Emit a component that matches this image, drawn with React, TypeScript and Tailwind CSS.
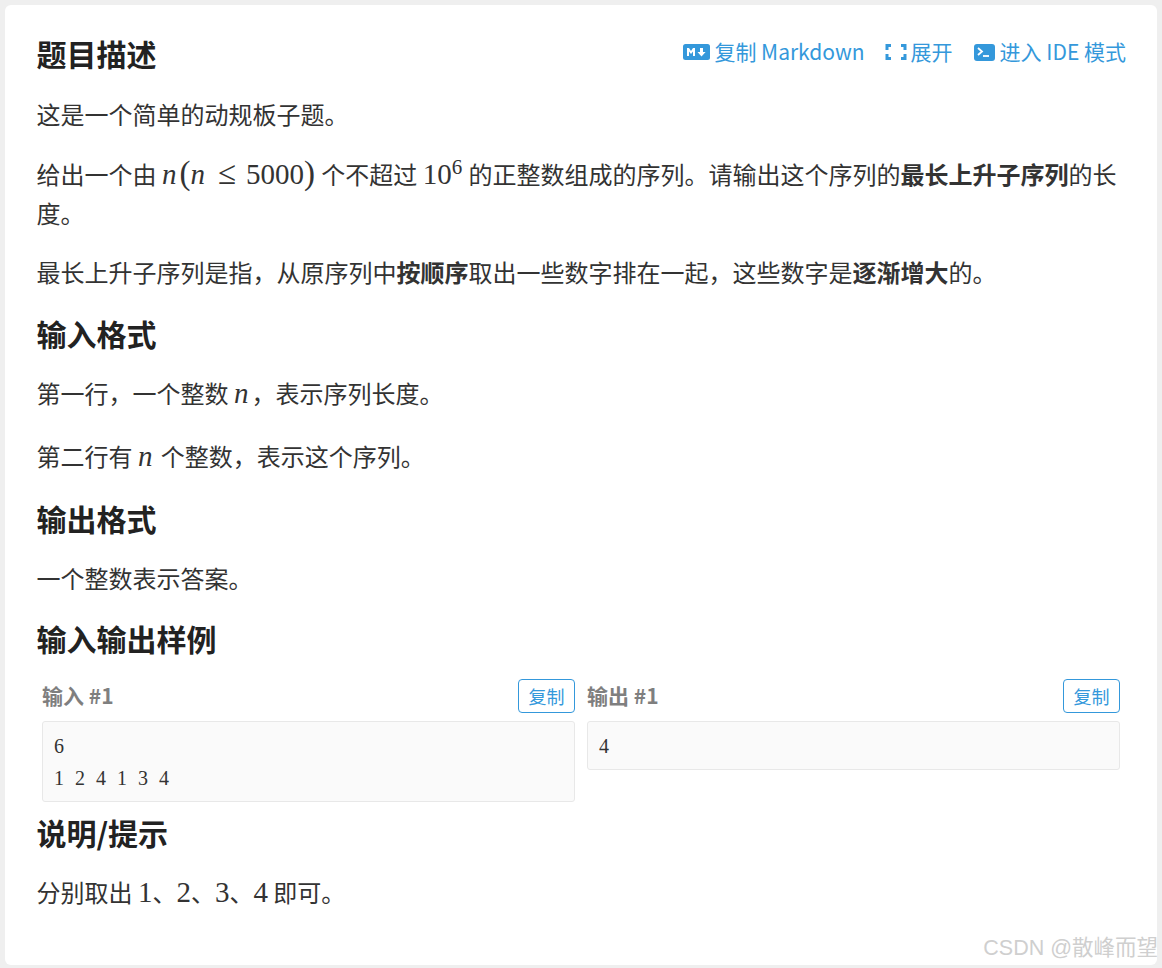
import React from "react";

const cjk = "font-['Noto_Sans_CJK_SC','Noto_Sans',sans-serif]";

function M({ children }: { children: React.ReactNode }) {
  return <span className="font-['Liberation_Serif',serif] text-[29px] leading-none">{children}</span>;
}

function N() {
  return (
    <span className="font-['Liberation_Serif',serif] text-[29px] leading-none italic tracking-[3px]">n</span>
  );
}

function H({ children, className = "" }: { children: React.ReactNode; className?: string }) {
  return <h2 className={`text-[30px] leading-[45px] font-bold text-[#222] ${className}`}>{children}</h2>;
}

function P({ children, className = "" }: { children: React.ReactNode; className?: string }) {
  return <p className={`text-[24px] leading-[39px] ${className}`}>{children}</p>;
}

function Sample({ label, lines }: { label: string; lines: string[] }) {
  return (
    <div className="flex flex-col items-stretch">
      <div className="flex items-center justify-between h-[34px]">
        <span className="text-[21px] font-bold text-[#7f7f7f]">{label}</span>
        <button className="w-[57px] h-[34px] rounded-[4px] border border-[#3498db] text-[18px] leading-none text-[#3498db] bg-white">
          复制
        </button>
      </div>
      <div className="mt-2 rounded-[3px] border border-[#e8e8e8] bg-[#fafafa] pl-[11px] pr-3 pt-[8px] pb-[7px] font-['Liberation_Serif',serif] text-[20px] leading-[32px] tracking-[0.5px] [word-spacing:5px] text-[#333]">
        {lines.map((l) => (
          <div key={l} className="whitespace-pre">{l}</div>
        ))}
      </div>
    </div>
  );
}

export default function App() {
  return (
    <div className={`relative h-[968px] w-[1162px] overflow-hidden bg-[#efefef] p-[5px] ${cjk} text-[#333]`}>
      <div className="h-[960px] rounded-[6px] bg-white pl-[31.500px] pr-[31px] pt-[26px]">
        <div className="flex items-center justify-between">
          <H>题目描述</H>
          <div className="flex items-center gap-[20px] text-[21px] text-[#3498db] -mt-[3px]">
            <span className="flex items-center gap-[4px]">
              <svg width="27" height="16" viewBox="0 0 27 16">
                <rect width="27" height="16" rx="2.5" fill="#3498db" />
                <path d="M4 12V4h2l2 3 2-3h2v8h-2V7.500L8 10 6 7.500V12z" fill="#fff" />
                <path d="M17 4h3v4h2.600l-4.100 4.500L14.500 8H17z" fill="#fff" />
              </svg>
              复制 Markdown
            </span>
            <span className="flex items-center gap-[4px]">
              <svg width="22" height="18" viewBox="0 0 22 18" fill="none" stroke="#3498db" strokeWidth="3">
                <path d="M2 7V2.500h4M16 2.500h4V7M20 11v4.500h-4M6 15.500H2V11" />
              </svg>
              展开
            </span>
            <span className="ml-[1px] flex items-center gap-[5px]">
              <svg width="21" height="17" viewBox="0 0 21 17">
                <rect width="21" height="17" rx="3" fill="#3498db" />
                <path d="M4 4l4 3.500L4 11" fill="none" stroke="#fff" strokeWidth="1.800" />
                <path d="M9 12h6" stroke="#fff" strokeWidth="1.800" />
              </svg>
              进入 IDE 模式
            </span>
          </div>
        </div>

        <P className="mt-[18px]">这是一个简单的动规板子题。</P>
        <P className="mt-[21px]">
          给出一个由 <N />
          <span className="font-['Liberation_Serif',serif] text-[33px] leading-none">(</span>
          <N />
          <span className="mx-[8px] inline-block w-[22px] text-center font-['Liberation_Serif',serif] text-[33px] leading-none">≤</span>
          <M>5000</M>
          <span className="mr-[1px] font-['Liberation_Serif',serif] text-[33px] leading-none">)</span> 个不超过 <M>10</M>
          <sup className="font-['Liberation_Serif',serif] text-[21px] mr-[1px]">6</sup> 的正整数组成的序列。请输出这个序列的
          <b>最长上升子序列</b>的长度。
        </P>
        <P className="mt-[20px]">
          最长上升子序列是指，从原序列中<b>按顺序</b>取出一些数字排在一起，这些数字是<b>逐渐增大</b>的。
        </P>
        <H className="mt-[20px]">输入格式</H>
        <P className="mt-[17px]">
          第一行，一个整数 <N />，表示序列长度。
        </P>
        <P className="mt-[24px]">
          第二行有 <N /> 个整数，表示这个序列。
        </P>
        <H className="mt-[21px]">输出格式</H>
        <P className="mt-[17px]">一个整数表示答案。</P>
        <H className="mt-[19px]">输入输出样例</H>
        <div className="mt-[18px] grid grid-cols-2 items-start gap-[12px] pl-[5.500px] pr-[6px]">
          <Sample label="输入 #1" lines={["6", "1 2 4 1 3 4"]} />
          <Sample label="输出 #1" lines={["4"]} />
        </div>
        <H className="mt-[8px]">说明/提示</H>
        <P className="mt-[17px]">
          分别取出 <M>1</M>、<M>2</M>、<M>3</M>、<M>4</M> 即可。
        </P>
      </div>
      <span className="absolute right-[4px] bottom-[4px] font-['Liberation_Sans','Noto_Sans_CJK_SC',sans-serif] text-[21.500px] text-[#cfcfcf]">
        CSDN @散峰而望
      </span>
    </div>
  );
}
